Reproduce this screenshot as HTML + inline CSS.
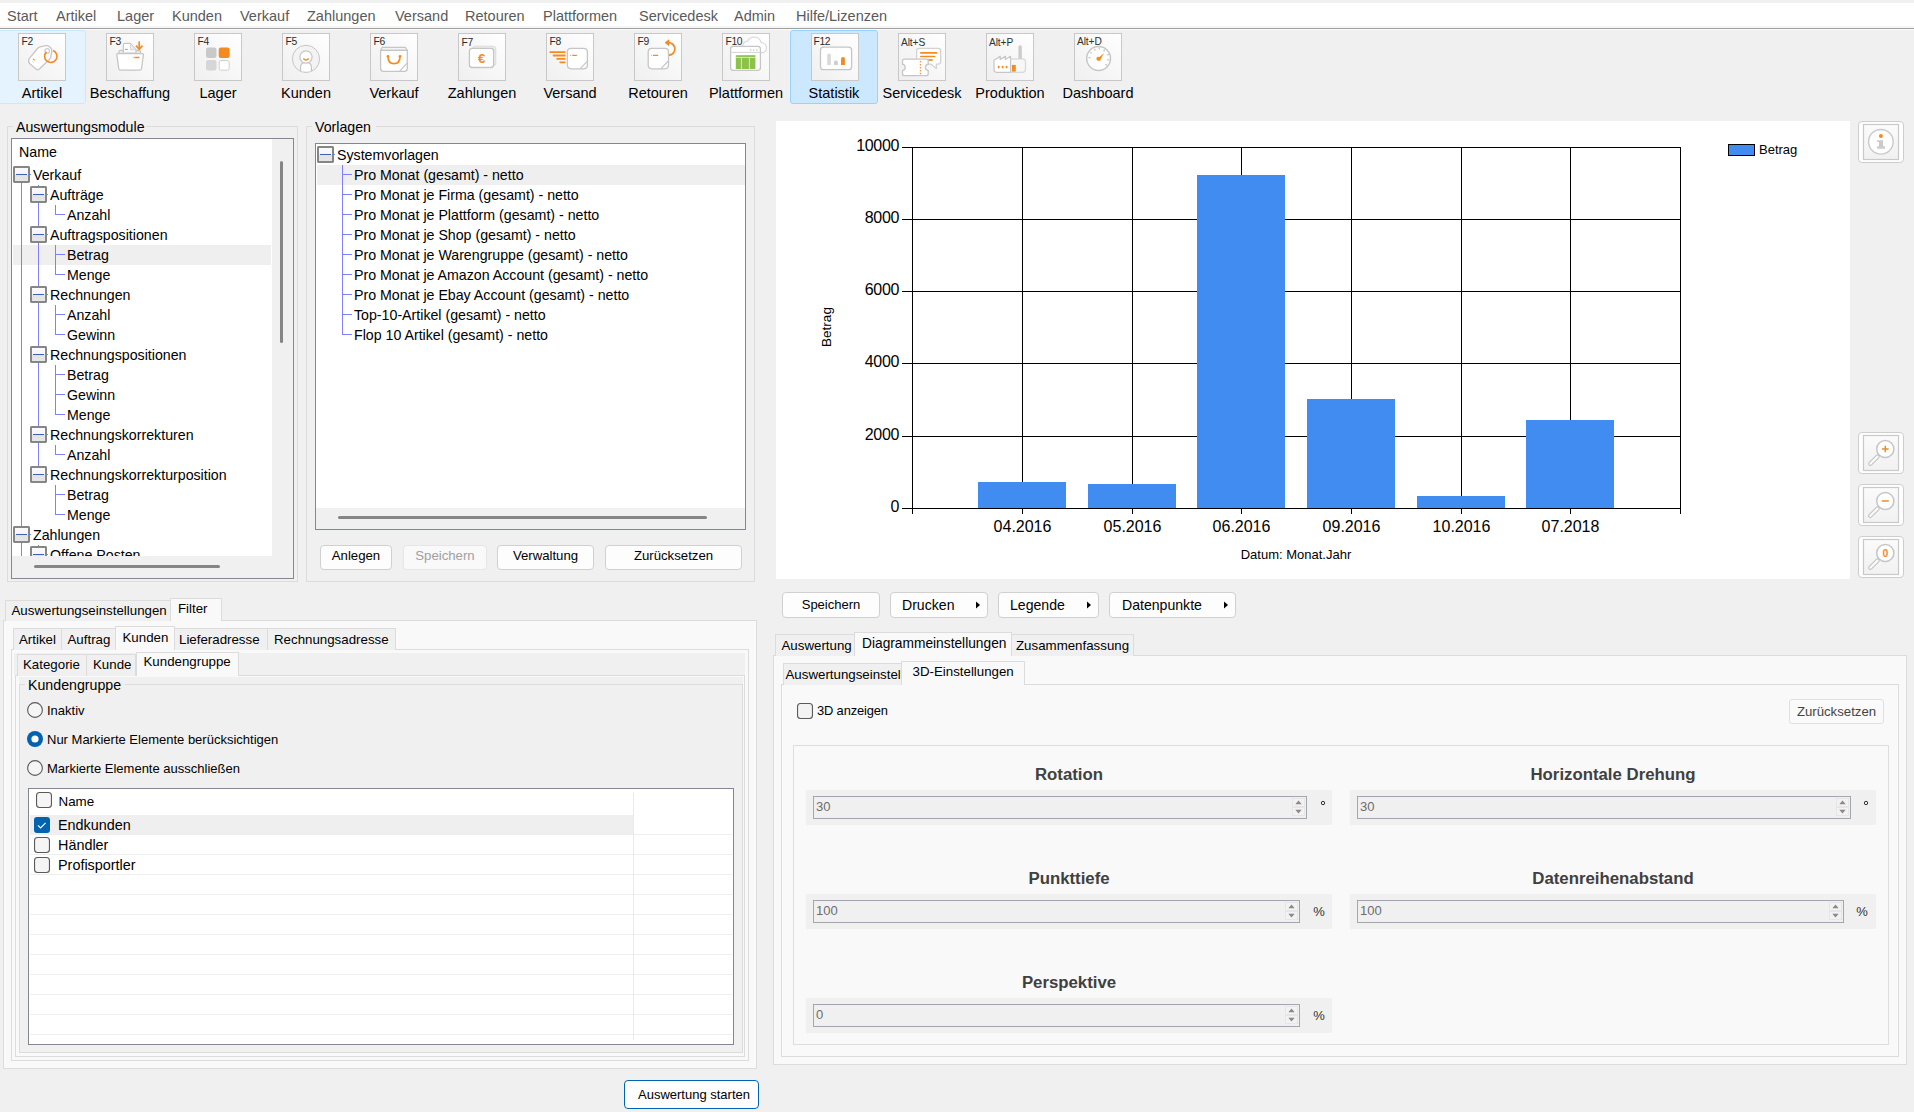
<!DOCTYPE html><html><head><meta charset="utf-8"><style>
html,body{margin:0;padding:0;}
body{width:1914px;height:1112px;position:relative;overflow:hidden;background:#f0f0f0;font-family:"Liberation Sans", sans-serif;}
.t{position:absolute;white-space:nowrap;}
.r{position:absolute;}
</style></head><body>
<div class="r" style="left:0px;top:3px;width:1914px;height:25px;background:#ffffff;"></div>
<div class="r" style="left:0px;top:26px;width:1914px;height:2px;background:#f6f6f6;"></div>
<div class="r" style="left:0px;top:28px;width:1914px;height:1px;background:#9f9f9f;"></div>
<div class="r" style="left:0px;top:29px;width:1914px;height:1px;background:#fbfbfb;"></div>
<div class="t" style="left:7px;top:6.98px;font-size:14.5px;line-height:18px;color:#5a5a5a;">Start</div>
<div class="t" style="left:56px;top:6.98px;font-size:14.5px;line-height:18px;color:#5a5a5a;">Artikel</div>
<div class="t" style="left:117px;top:6.98px;font-size:14.5px;line-height:18px;color:#5a5a5a;">Lager</div>
<div class="t" style="left:172px;top:6.98px;font-size:14.5px;line-height:18px;color:#5a5a5a;">Kunden</div>
<div class="t" style="left:240px;top:6.98px;font-size:14.5px;line-height:18px;color:#5a5a5a;">Verkauf</div>
<div class="t" style="left:307px;top:6.98px;font-size:14.5px;line-height:18px;color:#5a5a5a;">Zahlungen</div>
<div class="t" style="left:395px;top:6.98px;font-size:14.5px;line-height:18px;color:#5a5a5a;">Versand</div>
<div class="t" style="left:465px;top:6.98px;font-size:14.5px;line-height:18px;color:#5a5a5a;">Retouren</div>
<div class="t" style="left:543px;top:6.98px;font-size:14.5px;line-height:18px;color:#5a5a5a;">Plattformen</div>
<div class="t" style="left:639px;top:6.98px;font-size:14.5px;line-height:18px;color:#5a5a5a;">Servicedesk</div>
<div class="t" style="left:734px;top:6.98px;font-size:14.5px;line-height:18px;color:#5a5a5a;">Admin</div>
<div class="t" style="left:796px;top:6.98px;font-size:14.5px;line-height:18px;color:#5a5a5a;">Hilfe/Lizenzen</div>
<div class="r" style="left:-2px;top:30px;width:88px;height:74px;background:#e5f3ff;border:1px solid #cce8ff;box-sizing:border-box;border-radius:3px;"></div>
<div class="r" style="left:790px;top:30px;width:88px;height:74px;background:#cce8ff;border:1px solid #99d1ff;box-sizing:border-box;border-radius:3px;"></div>
<svg class="r" style="left:18px;top:33px;" width="48" height="48" viewBox="0 0 48 48"><defs><linearGradient id="g0" x1="1" y1="0" x2="0" y2="1"><stop offset="0" stop-color="#ffffff"/><stop offset="1" stop-color="#efefef"/></linearGradient></defs>
<rect x="0.5" y="0.5" width="47" height="47" fill="url(#g0)" stroke="#c8c8c8" stroke-width="1"/><path d="M11.2 25.6 L19.5 15.5 Q20.5 14.3 22 13.9 L28 12.6 Q29.6 12.3 30.8 13.3 L32.8 15 Q34 16 33.8 17.6 L32.8 23.5 Q32.5 25.2 31.3 26.5 L21.3 36 Q19.8 37.4 18.2 36.2 L11.6 30.6 Q9.7 28.9 11.2 25.6z" fill="#fff" stroke="#c6c6c6" stroke-width="1.3"/>
<circle cx="29.2" cy="18" r="2.3" fill="none" stroke="#cdcdcd" stroke-width="1.2"/>
<path d="M28.5 18.8 A6.2 6.2 0 1 0 35 17.5" fill="none" stroke="#f58a1f" stroke-width="1.6"/>
<path d="M15 25.8 l1.8 1.6" stroke="#f58a1f" stroke-width="1.1"/><path d="M14.2 28 l1.8 1.6" stroke="#d6d6d6" stroke-width="0.9"/></svg>
<div class="t" style="left:21.6px;top:34.93px;font-size:10.3px;line-height:13px;color:#2b2b2b;letter-spacing:-0.4px;">F2</div>
<div class="t" style="left:-18.00px;width:120px;text-align:center;top:83.98px;font-size:14.5px;line-height:18px;color:#000;">Artikel</div>
<svg class="r" style="left:106px;top:33px;" width="48" height="48" viewBox="0 0 48 48"><defs><linearGradient id="g1" x1="1" y1="0" x2="0" y2="1"><stop offset="0" stop-color="#ffffff"/><stop offset="1" stop-color="#efefef"/></linearGradient></defs>
<rect x="0.5" y="0.5" width="47" height="47" fill="url(#g1)" stroke="#c8c8c8" stroke-width="1"/><path d="M13 21 V18.8 Q13 17.3 14.5 17.3 H33 Q34.5 17.3 34.5 18.8 V21" fill="#e9e9e9" stroke="#c6c6c6" stroke-width="1.2"/>
<path d="M17.3 20 V11.8 Q17.3 10.4 18.7 10.4 H24.2 L30 16.8 V20z" fill="#fff" stroke="#c6c6c6" stroke-width="1.2"/>
<path d="M24.2 10.6 L24.8 16.8 H29.8" fill="#ececec" stroke="#d0d0d0" stroke-width="0.9"/>
<path d="M10.8 21.4 Q10.6 20.7 11.5 20.7 H36.6 Q37.5 20.7 37.4 21.4 L35.6 35.4 Q35.3 37.2 33.5 37.2 H14.8 Q13 37.2 12.7 35.4z" fill="#fff" stroke="#c6c6c6" stroke-width="1.3"/>
<path d="M19 16.4 h2.8" stroke="#f58a1f" stroke-width="1"/><path d="M26.8 24.5 h0.6 M28.4 24.5 h5" stroke="#f58a1f" stroke-width="1.3"/>
<path d="M33.2 8.4 v7" stroke="#f58a1f" stroke-width="1.7"/><path d="M30 12.6 L33.2 16.2 L36.4 12.6" fill="none" stroke="#f58a1f" stroke-width="1.7"/></svg>
<div class="t" style="left:109.6px;top:34.93px;font-size:10.3px;line-height:13px;color:#2b2b2b;letter-spacing:-0.4px;">F3</div>
<div class="t" style="left:70.00px;width:120px;text-align:center;top:83.98px;font-size:14.5px;line-height:18px;color:#000;">Beschaffung</div>
<svg class="r" style="left:194px;top:33px;" width="48" height="48" viewBox="0 0 48 48"><defs><linearGradient id="g2" x1="1" y1="0" x2="0" y2="1"><stop offset="0" stop-color="#ffffff"/><stop offset="1" stop-color="#efefef"/></linearGradient></defs>
<rect x="0.5" y="0.5" width="47" height="47" fill="url(#g2)" stroke="#c8c8c8" stroke-width="1"/><rect x="12" y="14.5" width="10.5" height="10.5" rx="2.2" fill="#c9c9c9"/>
<rect x="24.7" y="14.5" width="11" height="10.5" rx="2.2" fill="#f58a1f"/>
<rect x="12" y="27" width="10.5" height="10.5" rx="2.2" fill="#d6d6d6"/>
<rect x="25.2" y="27.5" width="10" height="9.7" rx="2" fill="#fff" stroke="#cfcfcf" stroke-width="1"/></svg>
<div class="t" style="left:197.6px;top:34.93px;font-size:10.3px;line-height:13px;color:#2b2b2b;letter-spacing:-0.4px;">F4</div>
<div class="t" style="left:158.00px;width:120px;text-align:center;top:83.98px;font-size:14.5px;line-height:18px;color:#000;">Lager</div>
<svg class="r" style="left:282px;top:33px;" width="48" height="48" viewBox="0 0 48 48"><defs><linearGradient id="g3" x1="1" y1="0" x2="0" y2="1"><stop offset="0" stop-color="#ffffff"/><stop offset="1" stop-color="#efefef"/></linearGradient></defs>
<rect x="0.5" y="0.5" width="47" height="47" fill="url(#g3)" stroke="#c8c8c8" stroke-width="1"/><circle cx="24" cy="25.9" r="13.6" fill="#f3f3f3" stroke="#c6c6c6" stroke-width="1"/>
<path d="M18.6 38.2 V34 Q18.6 29.4 24 29.4 Q29.4 29.4 29.4 34 V38.2" fill="#fff" stroke="#c6c6c6" stroke-width="1.2"/>
<circle cx="24" cy="24" r="6.1" fill="#fff" stroke="#c6c6c6" stroke-width="1.2"/>
<path d="M21.3 25.5 Q24 28.4 26.8 25.5" fill="none" stroke="#f58a1f" stroke-width="1.5"/></svg>
<div class="t" style="left:285.6px;top:34.93px;font-size:10.3px;line-height:13px;color:#2b2b2b;letter-spacing:-0.4px;">F5</div>
<div class="t" style="left:246.00px;width:120px;text-align:center;top:83.98px;font-size:14.5px;line-height:18px;color:#000;">Kunden</div>
<svg class="r" style="left:370px;top:33px;" width="48" height="48" viewBox="0 0 48 48"><defs><linearGradient id="g4" x1="1" y1="0" x2="0" y2="1"><stop offset="0" stop-color="#ffffff"/><stop offset="1" stop-color="#efefef"/></linearGradient></defs>
<rect x="0.5" y="0.5" width="47" height="47" fill="url(#g4)" stroke="#c8c8c8" stroke-width="1"/><path d="M12.3 14.3 H35.4 L37.2 17.4 H10.6z" fill="#f4f4f4" stroke="#c6c6c6" stroke-width="1.2" stroke-linejoin="round"/>
<path d="M10.6 17.4 H37.3 V35.6 Q37.3 38.4 34.5 38.4 H13.4 Q10.6 38.4 10.6 35.6z" fill="#fff" stroke="#c6c6c6" stroke-width="1.3"/>
<path d="M29.8 38.2 L37.1 30.2" stroke="#c6c6c6" stroke-width="1.2"/>
<path d="M18 23.4 Q18 30.6 24 30.6 Q30 30.6 30 23.4" fill="none" stroke="#f58a1f" stroke-width="1.7"/>
<circle cx="18" cy="23.3" r="1.3" fill="#f58a1f"/><circle cx="30" cy="23.3" r="1.3" fill="#f58a1f"/></svg>
<div class="t" style="left:373.6px;top:34.93px;font-size:10.3px;line-height:13px;color:#2b2b2b;letter-spacing:-0.4px;">F6</div>
<div class="t" style="left:334.00px;width:120px;text-align:center;top:83.98px;font-size:14.5px;line-height:18px;color:#000;">Verkauf</div>
<svg class="r" style="left:458px;top:33px;" width="48" height="48" viewBox="0 0 48 48"><defs><linearGradient id="g5" x1="1" y1="0" x2="0" y2="1"><stop offset="0" stop-color="#ffffff"/><stop offset="1" stop-color="#efefef"/></linearGradient></defs>
<rect x="0.5" y="0.5" width="47" height="47" fill="url(#g5)" stroke="#c8c8c8" stroke-width="1"/><rect x="14.7" y="13.2" width="23.1" height="19.6" rx="2.8" fill="#ececec" stroke="#dcdcdc" stroke-width="1"/>
<rect x="11.4" y="15.3" width="24.2" height="19.2" rx="2.8" fill="#fff" stroke="#c6c6c6" stroke-width="1.3"/>
<text x="23.6" y="29.6" font-family="Liberation Sans" font-weight="bold" font-size="13.2" fill="#f58a1f" text-anchor="middle">€</text></svg>
<div class="t" style="left:461.6px;top:35.73px;font-size:10.3px;line-height:13px;color:#2b2b2b;letter-spacing:-0.4px;">F7</div>
<div class="t" style="left:422.00px;width:120px;text-align:center;top:83.98px;font-size:14.5px;line-height:18px;color:#000;">Zahlungen</div>
<svg class="r" style="left:546px;top:33px;" width="48" height="48" viewBox="0 0 48 48"><defs><linearGradient id="g6" x1="1" y1="0" x2="0" y2="1"><stop offset="0" stop-color="#ffffff"/><stop offset="1" stop-color="#efefef"/></linearGradient></defs>
<rect x="0.5" y="0.5" width="47" height="47" fill="url(#g6)" stroke="#c8c8c8" stroke-width="1"/><path d="M4.3 19.2 H18.8 M7.6 22.5 H18.8 M11.2 25.9 H18.8 M14.2 29.3 H18.8" stroke="#f58a1f" stroke-width="1.8" stroke-linecap="round"/>
<path d="M21.4 19 Q21.4 15.3 25.1 15.3 H37.7 Q41.4 15.3 41.4 19 V32.1 Q41.4 35.8 37.7 35.8 H25.1 Q21.4 35.8 21.4 32.1z" fill="#fff" stroke="#c6c6c6" stroke-width="1.3"/>
<path d="M34.3 35.6 L41.2 28.3" stroke="#c6c6c6" stroke-width="1.2"/>
<path d="M24.2 22.4 h0.6 M26.3 22.4 h4.6" stroke="#f58a1f" stroke-width="1.2"/></svg>
<div class="t" style="left:549.6px;top:34.93px;font-size:10.3px;line-height:13px;color:#2b2b2b;letter-spacing:-0.4px;">F8</div>
<div class="t" style="left:510.00px;width:120px;text-align:center;top:83.98px;font-size:14.5px;line-height:18px;color:#000;">Versand</div>
<svg class="r" style="left:634px;top:33px;" width="48" height="48" viewBox="0 0 48 48"><defs><linearGradient id="g7" x1="1" y1="0" x2="0" y2="1"><stop offset="0" stop-color="#ffffff"/><stop offset="1" stop-color="#efefef"/></linearGradient></defs>
<rect x="0.5" y="0.5" width="47" height="47" fill="url(#g7)" stroke="#c8c8c8" stroke-width="1"/><path d="M14.2 19 Q14.2 15.3 17.9 15.3 H30.8 Q34.5 15.3 34.5 19 V32.1 Q34.5 35.8 30.8 35.8 H17.9 Q14.2 35.8 14.2 32.1z" fill="#fff" stroke="#c6c6c6" stroke-width="1.3"/>
<path d="M27 35.6 L34.3 28" stroke="#c6c6c6" stroke-width="1.2"/>
<path d="M17.1 22.4 h0.6 M19 22.4 h5.2" stroke="#f58a1f" stroke-width="1.2"/>
<path d="M35 22.2 A6.25 6.25 0 0 0 34.2 9.7" fill="none" stroke="#f58a1f" stroke-width="1.7"/>
<path d="M31 9.7 L35 6.8 L35 12.6z" fill="#f58a1f" stroke="#f58a1f" stroke-width="0.8" stroke-linejoin="round"/></svg>
<div class="t" style="left:637.6px;top:34.93px;font-size:10.3px;line-height:13px;color:#2b2b2b;letter-spacing:-0.4px;">F9</div>
<div class="t" style="left:598.00px;width:120px;text-align:center;top:83.98px;font-size:14.5px;line-height:18px;color:#000;">Retouren</div>
<svg class="r" style="left:722px;top:33px;" width="48" height="48" viewBox="0 0 48 48"><defs><linearGradient id="g8" x1="1" y1="0" x2="0" y2="1"><stop offset="0" stop-color="#ffffff"/><stop offset="1" stop-color="#efefef"/></linearGradient></defs>
<rect x="0.5" y="0.5" width="47" height="47" fill="url(#g8)" stroke="#c8c8c8" stroke-width="1"/><path d="M20.7 14 Q20.5 8.8 25.6 8.3 Q27.5 4 32.3 4 Q37.6 4.2 38.9 9.2 Q44.6 10.3 44.5 15.2 Q44.3 19.4 40 19.6 H30z" fill="#fff" stroke="#d6d6d6" stroke-width="1.1"/>
<rect x="8.6" y="13.4" width="29.8" height="23.9" rx="2.5" fill="#fff" stroke="#c6c6c6" stroke-width="1.3"/>
<path d="M8.6 19.4 H38.4" stroke="#d6d6d6" stroke-width="1.1"/>
<circle cx="28.7" cy="17" r="0.9" fill="#d8d8d8"/><circle cx="31.7" cy="17" r="0.9" fill="#d8d8d8"/><circle cx="34.7" cy="17" r="0.9" fill="#d8d8d8"/>
<rect x="13.8" y="22.2" width="19.6" height="13.8" fill="#8bc34a"/>
<path d="M13.8 24.4 H33.4 M19.4 24.4 V36 M27.4 24.4 V36" stroke="#e6f2d8" stroke-width="0.8"/></svg>
<div class="t" style="left:725.6px;top:34.93px;font-size:10.3px;line-height:13px;color:#2b2b2b;letter-spacing:-0.4px;">F10</div>
<div class="t" style="left:686.00px;width:120px;text-align:center;top:83.98px;font-size:14.5px;line-height:18px;color:#000;">Plattformen</div>
<svg class="r" style="left:811px;top:33px;" width="48" height="48" viewBox="0 0 48 48"><defs><linearGradient id="g9" x1="1" y1="0" x2="0" y2="1"><stop offset="0" stop-color="#ffffff"/><stop offset="1" stop-color="#efefef"/></linearGradient></defs>
<rect x="0.5" y="0.5" width="47" height="47" fill="url(#g9)" stroke="#c8c8c8" stroke-width="1"/><rect x="9.5" y="14.2" width="31.1" height="22.5" rx="3" fill="#fff" stroke="#c6c6c6" stroke-width="1.3"/>
<path d="M16.2 31.9 V22.2 Q16.2 20.5 18 20.5 Q19.9 20.5 19.9 22.2 V31.9z" fill="#dadada"/>
<path d="M23.1 31.9 V28.8 Q23.1 27.4 25 27.4 Q26.8 27.4 26.8 28.8 V31.9z" fill="#cdcdcd"/>
<path d="M30 31.9 V25.8 Q30 24 32 24 Q33.9 24 33.9 25.8 V31.9z" fill="#f58a1f"/></svg>
<div class="t" style="left:813.6px;top:34.93px;font-size:10.3px;line-height:13px;color:#2b2b2b;letter-spacing:-0.4px;">F12</div>
<div class="t" style="left:774.00px;width:120px;text-align:center;top:83.98px;font-size:14.5px;line-height:18px;color:#000;">Statistik</div>
<svg class="r" style="left:898px;top:33px;" width="48" height="48" viewBox="0 0 48 48"><defs><linearGradient id="g10" x1="1" y1="0" x2="0" y2="1"><stop offset="0" stop-color="#ffffff"/><stop offset="1" stop-color="#efefef"/></linearGradient></defs>
<rect x="0.5" y="0.5" width="47" height="47" fill="url(#g10)" stroke="#c8c8c8" stroke-width="1"/><path d="M18.6 17.8 Q18.6 15.3 21.1 15.3 H40.2 Q42.7 15.3 42.7 17.8 V28.6 Q42.7 31.1 40.2 31.1 H38.4 V35.4 L32.8 31.1 H21.1 Q18.6 31.1 18.6 28.6z" fill="#fff" stroke="#d2d2d2" stroke-width="1.3" stroke-linejoin="round"/>
<path d="M22.9 19.9 H38.6 M22.9 23.5 H36.7" stroke="#f58a1f" stroke-width="1.7" stroke-linecap="round"/>
<path d="M30.2 27 H34.7" stroke="#f58a1f" stroke-width="1.7"/>
<path d="M4.5 28 Q4.5 26.1 6.4 26.1 H28.3 Q30.2 26.1 30.2 28 V31.2 Q27.4 31.8 27.4 34.4 Q27.4 37 30.2 37.6 V40.8 Q30.2 42.7 28.3 42.7 H6.4 Q4.5 42.7 4.5 40.8 V37.6 Q7.2 37 7.2 34.4 Q7.2 31.8 4.5 31.2z" fill="#fff" stroke="#c6c6c6" stroke-width="1.3"/>
<path d="M22.4 28.7 V41" stroke="#f58a1f" stroke-width="1.5" stroke-linecap="round" stroke-dasharray="0 2.98"/></svg>
<div class="t" style="left:901px;top:36.37px;font-size:10.2px;line-height:13px;color:#303030;letter-spacing:-0.1px;">Alt+S</div>
<div class="t" style="left:862.00px;width:120px;text-align:center;top:83.98px;font-size:14.5px;line-height:18px;color:#000;">Servicedesk</div>
<svg class="r" style="left:986px;top:33px;" width="48" height="48" viewBox="0 0 48 48"><defs><linearGradient id="g11" x1="1" y1="0" x2="0" y2="1"><stop offset="0" stop-color="#ffffff"/><stop offset="1" stop-color="#efefef"/></linearGradient></defs>
<rect x="0.5" y="0.5" width="47" height="47" fill="url(#g11)" stroke="#c8c8c8" stroke-width="1"/><path d="M32.4 25.9 V13.9 Q32.4 12.3 34.1 12.3 Q35.8 12.3 35.8 13.9 V25.9z" fill="#cbcbcb"/>
<path d="M24.5 25.9 H36.5 Q39.5 25.9 39.5 28.9 V36.3 Q39.5 39.3 36.5 39.3 H24.5z" fill="#f7f7f7" stroke="#d8d8d8" stroke-width="1.2"/>
<path d="M8 27.3 L14.2 23.3 V26.6 L19.4 23.3 V26.6 L24.5 23.3 V39.3 H10.5 Q8 39.3 8 36.8z" fill="#fff" stroke="#c6c6c6" stroke-width="1.2" stroke-linejoin="round"/>
<ellipse cx="12.7" cy="34.1" rx="1" ry="1.4" fill="#f58a1f"/><ellipse cx="16.6" cy="34.1" rx="1" ry="1.4" fill="#f58a1f"/><ellipse cx="20.5" cy="34.1" rx="1" ry="1.4" fill="#f58a1f"/>
<rect x="25.9" y="31.9" width="3.9" height="6.7" fill="#f58a1f"/></svg>
<div class="t" style="left:989px;top:36.37px;font-size:10.2px;line-height:13px;color:#303030;letter-spacing:-0.1px;">Alt+P</div>
<div class="t" style="left:950.00px;width:120px;text-align:center;top:83.98px;font-size:14.5px;line-height:18px;color:#000;">Produktion</div>
<svg class="r" style="left:1074px;top:33px;" width="48" height="48" viewBox="0 0 48 48"><defs><linearGradient id="g12" x1="1" y1="0" x2="0" y2="1"><stop offset="0" stop-color="#ffffff"/><stop offset="1" stop-color="#efefef"/></linearGradient></defs>
<rect x="0.5" y="0.5" width="47" height="47" fill="url(#g12)" stroke="#c8c8c8" stroke-width="1"/><circle cx="24.6" cy="25.5" r="11.9" fill="#fff" stroke="#c6c6c6" stroke-width="1.5"/>
<g stroke="#c6c6c6" stroke-width="1.3"><path d="M25.2 14.4 v2.2"/><path d="M20.4 15.8 l0.9 1.8"/><path d="M16.2 19.2 l1.8 1"/><path d="M14.4 24.6 h2.2"/><path d="M30.6 16.6 l-1 1.8"/><path d="M35 21.4 l-2.1 0.6"/><path d="M35.4 26.8 h-2.2"/><path d="M33 32.6 l-1.6 -1.4"/></g>
<path d="M22.8 26.6 L29.9 20 L26 27.8z" fill="#f58a1f"/><circle cx="24.4" cy="25.8" r="2" fill="#f58a1f"/></svg>
<div class="t" style="left:1077px;top:35.37px;font-size:10.2px;line-height:13px;color:#303030;letter-spacing:-0.1px;">Alt+D</div>
<div class="t" style="left:1038.00px;width:120px;text-align:center;top:83.98px;font-size:14.5px;line-height:18px;color:#000;">Dashboard</div>
<div class="r" style="left:7px;top:126px;width:291px;height:456px;border:1px solid #dcdcdc;box-sizing:border-box;"></div>
<div class="r" style="left:13px;top:125px;width:133px;height:3px;background:#f0f0f0;"></div>
<div class="t" style="left:16px;top:118.08px;font-size:14.2px;line-height:18px;color:#000;">Auswertungsmodule</div>
<div class="r" style="left:11px;top:138px;width:283px;height:441px;background:#ffffff;border:1px solid #828790;box-sizing:border-box;"></div>
<div class="r" style="left:272px;top:139px;width:21px;height:439px;background:#f0f0f0;"></div>
<div class="r" style="left:12px;top:556px;width:281px;height:22px;background:#f0f0f0;"></div>
<div class="r" style="left:280px;top:161px;width:3px;height:182px;background:#858585;border-radius:1.5px;"></div>
<div class="r" style="left:34px;top:565px;width:186px;height:3px;background:#858585;border-radius:1.5px;"></div>
<div class="t" style="left:19px;top:143.08px;font-size:14.2px;line-height:18px;color:#000;">Name</div>
<div class="r" style="left:0;top:0;width:272px;height:556px;clip-path:inset(139px 0 0 11px);">
<div class="r" style="left:13px;top:245px;width:258px;height:20px;background:#efefef;"></div>
<div class="r" style="left:21px;top:174px;width:1px;height:360px;background:#7f7fff;"></div>
<div class="r" style="left:30px;top:174px;width:1px;height:1px;background:#7f7fff;"></div>
<div class="r" style="left:38px;top:194px;width:1px;height:40px;background:#7f7fff;"></div>
<div class="r" style="left:47px;top:194px;width:1px;height:1px;background:#7f7fff;"></div>
<div class="r" style="left:55px;top:205px;width:1px;height:9px;background:#7f7fff;"></div>
<div class="r" style="left:55px;top:214px;width:10px;height:1px;background:#7f7fff;"></div>
<div class="r" style="left:38px;top:234px;width:1px;height:60px;background:#7f7fff;"></div>
<div class="r" style="left:47px;top:234px;width:1px;height:1px;background:#7f7fff;"></div>
<div class="r" style="left:55px;top:245px;width:1px;height:9px;background:#7f7fff;"></div>
<div class="r" style="left:55px;top:254px;width:10px;height:1px;background:#7f7fff;"></div>
<div class="r" style="left:55px;top:254px;width:1px;height:20px;background:#7f7fff;"></div>
<div class="r" style="left:55px;top:265px;width:1px;height:9px;background:#7f7fff;"></div>
<div class="r" style="left:55px;top:274px;width:10px;height:1px;background:#7f7fff;"></div>
<div class="r" style="left:38px;top:294px;width:1px;height:60px;background:#7f7fff;"></div>
<div class="r" style="left:47px;top:294px;width:1px;height:1px;background:#7f7fff;"></div>
<div class="r" style="left:55px;top:305px;width:1px;height:9px;background:#7f7fff;"></div>
<div class="r" style="left:55px;top:314px;width:10px;height:1px;background:#7f7fff;"></div>
<div class="r" style="left:55px;top:314px;width:1px;height:20px;background:#7f7fff;"></div>
<div class="r" style="left:55px;top:325px;width:1px;height:9px;background:#7f7fff;"></div>
<div class="r" style="left:55px;top:334px;width:10px;height:1px;background:#7f7fff;"></div>
<div class="r" style="left:38px;top:354px;width:1px;height:80px;background:#7f7fff;"></div>
<div class="r" style="left:47px;top:354px;width:1px;height:1px;background:#7f7fff;"></div>
<div class="r" style="left:55px;top:365px;width:1px;height:9px;background:#7f7fff;"></div>
<div class="r" style="left:55px;top:374px;width:10px;height:1px;background:#7f7fff;"></div>
<div class="r" style="left:55px;top:374px;width:1px;height:20px;background:#7f7fff;"></div>
<div class="r" style="left:55px;top:385px;width:1px;height:9px;background:#7f7fff;"></div>
<div class="r" style="left:55px;top:394px;width:10px;height:1px;background:#7f7fff;"></div>
<div class="r" style="left:55px;top:394px;width:1px;height:20px;background:#7f7fff;"></div>
<div class="r" style="left:55px;top:405px;width:1px;height:9px;background:#7f7fff;"></div>
<div class="r" style="left:55px;top:414px;width:10px;height:1px;background:#7f7fff;"></div>
<div class="r" style="left:38px;top:434px;width:1px;height:40px;background:#7f7fff;"></div>
<div class="r" style="left:47px;top:434px;width:1px;height:1px;background:#7f7fff;"></div>
<div class="r" style="left:55px;top:445px;width:1px;height:9px;background:#7f7fff;"></div>
<div class="r" style="left:55px;top:454px;width:10px;height:1px;background:#7f7fff;"></div>
<div class="r" style="left:47px;top:474px;width:1px;height:1px;background:#7f7fff;"></div>
<div class="r" style="left:55px;top:485px;width:1px;height:9px;background:#7f7fff;"></div>
<div class="r" style="left:55px;top:494px;width:10px;height:1px;background:#7f7fff;"></div>
<div class="r" style="left:55px;top:494px;width:1px;height:20px;background:#7f7fff;"></div>
<div class="r" style="left:55px;top:505px;width:1px;height:9px;background:#7f7fff;"></div>
<div class="r" style="left:55px;top:514px;width:10px;height:1px;background:#7f7fff;"></div>
<div class="r" style="left:21px;top:534px;width:1px;height:22px;background:#7f7fff;"></div>
<div class="r" style="left:30px;top:534px;width:1px;height:1px;background:#7f7fff;"></div>
<div class="r" style="left:38px;top:554px;width:1px;height:2px;background:#7f7fff;"></div>
<div class="r" style="left:47px;top:554px;width:1px;height:1px;background:#7f7fff;"></div>
<svg class="r" style="left:13px;top:166px;" width="17" height="17" viewBox="0 0 17 17"><defs><linearGradient id="ex13_166" x1="0" y1="0" x2="0" y2="1"><stop offset="0" stop-color="#fbfbfb"/><stop offset="0.5" stop-color="#f4f4f4"/><stop offset="0.52" stop-color="#e2e2e2"/><stop offset="1" stop-color="#e6e6e6"/></linearGradient></defs>
<rect x="1" y="1" width="15" height="15" fill="url(#ex13_166)" stroke="#868686" stroke-width="2"/>
<path d="M3 8.5 h11" stroke="#3d5fb8" stroke-width="1"/>
<rect x="0" y="0" width="1" height="1" fill="#c8c8c8"/><rect x="16" y="0" width="1" height="1" fill="#c8c8c8"/><rect x="0" y="16" width="1" height="1" fill="#c8c8c8"/><rect x="16" y="16" width="1" height="1" fill="#c8c8c8"/></svg>
<div class="t" style="left:33px;top:166.08px;font-size:14.2px;line-height:18px;color:#000;">Verkauf</div>
<div class="r" style="left:38px;top:185px;width:1px;height:1px;background:#7f7fff;"></div>
<svg class="r" style="left:30px;top:186px;" width="17" height="17" viewBox="0 0 17 17"><defs><linearGradient id="ex30_186" x1="0" y1="0" x2="0" y2="1"><stop offset="0" stop-color="#fbfbfb"/><stop offset="0.5" stop-color="#f4f4f4"/><stop offset="0.52" stop-color="#e2e2e2"/><stop offset="1" stop-color="#e6e6e6"/></linearGradient></defs>
<rect x="1" y="1" width="15" height="15" fill="url(#ex30_186)" stroke="#868686" stroke-width="2"/>
<path d="M3 8.5 h11" stroke="#3d5fb8" stroke-width="1"/>
<rect x="0" y="0" width="1" height="1" fill="#c8c8c8"/><rect x="16" y="0" width="1" height="1" fill="#c8c8c8"/><rect x="0" y="16" width="1" height="1" fill="#c8c8c8"/><rect x="16" y="16" width="1" height="1" fill="#c8c8c8"/></svg>
<div class="t" style="left:50px;top:186.08px;font-size:14.2px;line-height:18px;color:#000;">Aufträge</div>
<div class="t" style="left:67px;top:206.08px;font-size:14.2px;line-height:18px;color:#000;">Anzahl</div>
<div class="r" style="left:38px;top:225px;width:1px;height:1px;background:#7f7fff;"></div>
<svg class="r" style="left:30px;top:226px;" width="17" height="17" viewBox="0 0 17 17"><defs><linearGradient id="ex30_226" x1="0" y1="0" x2="0" y2="1"><stop offset="0" stop-color="#fbfbfb"/><stop offset="0.5" stop-color="#f4f4f4"/><stop offset="0.52" stop-color="#e2e2e2"/><stop offset="1" stop-color="#e6e6e6"/></linearGradient></defs>
<rect x="1" y="1" width="15" height="15" fill="url(#ex30_226)" stroke="#868686" stroke-width="2"/>
<path d="M3 8.5 h11" stroke="#3d5fb8" stroke-width="1"/>
<rect x="0" y="0" width="1" height="1" fill="#c8c8c8"/><rect x="16" y="0" width="1" height="1" fill="#c8c8c8"/><rect x="0" y="16" width="1" height="1" fill="#c8c8c8"/><rect x="16" y="16" width="1" height="1" fill="#c8c8c8"/></svg>
<div class="t" style="left:50px;top:226.08px;font-size:14.2px;line-height:18px;color:#000;">Auftragspositionen</div>
<div class="t" style="left:67px;top:246.08px;font-size:14.2px;line-height:18px;color:#000;">Betrag</div>
<div class="t" style="left:67px;top:266.08px;font-size:14.2px;line-height:18px;color:#000;">Menge</div>
<div class="r" style="left:38px;top:285px;width:1px;height:1px;background:#7f7fff;"></div>
<svg class="r" style="left:30px;top:286px;" width="17" height="17" viewBox="0 0 17 17"><defs><linearGradient id="ex30_286" x1="0" y1="0" x2="0" y2="1"><stop offset="0" stop-color="#fbfbfb"/><stop offset="0.5" stop-color="#f4f4f4"/><stop offset="0.52" stop-color="#e2e2e2"/><stop offset="1" stop-color="#e6e6e6"/></linearGradient></defs>
<rect x="1" y="1" width="15" height="15" fill="url(#ex30_286)" stroke="#868686" stroke-width="2"/>
<path d="M3 8.5 h11" stroke="#3d5fb8" stroke-width="1"/>
<rect x="0" y="0" width="1" height="1" fill="#c8c8c8"/><rect x="16" y="0" width="1" height="1" fill="#c8c8c8"/><rect x="0" y="16" width="1" height="1" fill="#c8c8c8"/><rect x="16" y="16" width="1" height="1" fill="#c8c8c8"/></svg>
<div class="t" style="left:50px;top:286.08px;font-size:14.2px;line-height:18px;color:#000;">Rechnungen</div>
<div class="t" style="left:67px;top:306.08px;font-size:14.2px;line-height:18px;color:#000;">Anzahl</div>
<div class="t" style="left:67px;top:326.08px;font-size:14.2px;line-height:18px;color:#000;">Gewinn</div>
<div class="r" style="left:38px;top:345px;width:1px;height:1px;background:#7f7fff;"></div>
<svg class="r" style="left:30px;top:346px;" width="17" height="17" viewBox="0 0 17 17"><defs><linearGradient id="ex30_346" x1="0" y1="0" x2="0" y2="1"><stop offset="0" stop-color="#fbfbfb"/><stop offset="0.5" stop-color="#f4f4f4"/><stop offset="0.52" stop-color="#e2e2e2"/><stop offset="1" stop-color="#e6e6e6"/></linearGradient></defs>
<rect x="1" y="1" width="15" height="15" fill="url(#ex30_346)" stroke="#868686" stroke-width="2"/>
<path d="M3 8.5 h11" stroke="#3d5fb8" stroke-width="1"/>
<rect x="0" y="0" width="1" height="1" fill="#c8c8c8"/><rect x="16" y="0" width="1" height="1" fill="#c8c8c8"/><rect x="0" y="16" width="1" height="1" fill="#c8c8c8"/><rect x="16" y="16" width="1" height="1" fill="#c8c8c8"/></svg>
<div class="t" style="left:50px;top:346.08px;font-size:14.2px;line-height:18px;color:#000;">Rechnungspositionen</div>
<div class="t" style="left:67px;top:366.08px;font-size:14.2px;line-height:18px;color:#000;">Betrag</div>
<div class="t" style="left:67px;top:386.08px;font-size:14.2px;line-height:18px;color:#000;">Gewinn</div>
<div class="t" style="left:67px;top:406.08px;font-size:14.2px;line-height:18px;color:#000;">Menge</div>
<div class="r" style="left:38px;top:425px;width:1px;height:1px;background:#7f7fff;"></div>
<svg class="r" style="left:30px;top:426px;" width="17" height="17" viewBox="0 0 17 17"><defs><linearGradient id="ex30_426" x1="0" y1="0" x2="0" y2="1"><stop offset="0" stop-color="#fbfbfb"/><stop offset="0.5" stop-color="#f4f4f4"/><stop offset="0.52" stop-color="#e2e2e2"/><stop offset="1" stop-color="#e6e6e6"/></linearGradient></defs>
<rect x="1" y="1" width="15" height="15" fill="url(#ex30_426)" stroke="#868686" stroke-width="2"/>
<path d="M3 8.5 h11" stroke="#3d5fb8" stroke-width="1"/>
<rect x="0" y="0" width="1" height="1" fill="#c8c8c8"/><rect x="16" y="0" width="1" height="1" fill="#c8c8c8"/><rect x="0" y="16" width="1" height="1" fill="#c8c8c8"/><rect x="16" y="16" width="1" height="1" fill="#c8c8c8"/></svg>
<div class="t" style="left:50px;top:426.08px;font-size:14.2px;line-height:18px;color:#000;">Rechnungskorrekturen</div>
<div class="t" style="left:67px;top:446.08px;font-size:14.2px;line-height:18px;color:#000;">Anzahl</div>
<div class="r" style="left:38px;top:465px;width:1px;height:1px;background:#7f7fff;"></div>
<svg class="r" style="left:30px;top:466px;" width="17" height="17" viewBox="0 0 17 17"><defs><linearGradient id="ex30_466" x1="0" y1="0" x2="0" y2="1"><stop offset="0" stop-color="#fbfbfb"/><stop offset="0.5" stop-color="#f4f4f4"/><stop offset="0.52" stop-color="#e2e2e2"/><stop offset="1" stop-color="#e6e6e6"/></linearGradient></defs>
<rect x="1" y="1" width="15" height="15" fill="url(#ex30_466)" stroke="#868686" stroke-width="2"/>
<path d="M3 8.5 h11" stroke="#3d5fb8" stroke-width="1"/>
<rect x="0" y="0" width="1" height="1" fill="#c8c8c8"/><rect x="16" y="0" width="1" height="1" fill="#c8c8c8"/><rect x="0" y="16" width="1" height="1" fill="#c8c8c8"/><rect x="16" y="16" width="1" height="1" fill="#c8c8c8"/></svg>
<div class="t" style="left:50px;top:466.08px;font-size:14.2px;line-height:18px;color:#000;">Rechnungskorrekturposition</div>
<div class="t" style="left:67px;top:486.08px;font-size:14.2px;line-height:18px;color:#000;">Betrag</div>
<div class="t" style="left:67px;top:506.08px;font-size:14.2px;line-height:18px;color:#000;">Menge</div>
<svg class="r" style="left:13px;top:526px;" width="17" height="17" viewBox="0 0 17 17"><defs><linearGradient id="ex13_526" x1="0" y1="0" x2="0" y2="1"><stop offset="0" stop-color="#fbfbfb"/><stop offset="0.5" stop-color="#f4f4f4"/><stop offset="0.52" stop-color="#e2e2e2"/><stop offset="1" stop-color="#e6e6e6"/></linearGradient></defs>
<rect x="1" y="1" width="15" height="15" fill="url(#ex13_526)" stroke="#868686" stroke-width="2"/>
<path d="M3 8.5 h11" stroke="#3d5fb8" stroke-width="1"/>
<rect x="0" y="0" width="1" height="1" fill="#c8c8c8"/><rect x="16" y="0" width="1" height="1" fill="#c8c8c8"/><rect x="0" y="16" width="1" height="1" fill="#c8c8c8"/><rect x="16" y="16" width="1" height="1" fill="#c8c8c8"/></svg>
<div class="t" style="left:33px;top:526.08px;font-size:14.2px;line-height:18px;color:#000;">Zahlungen</div>
<div class="r" style="left:38px;top:545px;width:1px;height:1px;background:#7f7fff;"></div>
<svg class="r" style="left:30px;top:546px;" width="17" height="17" viewBox="0 0 17 17"><defs><linearGradient id="ex30_546" x1="0" y1="0" x2="0" y2="1"><stop offset="0" stop-color="#fbfbfb"/><stop offset="0.5" stop-color="#f4f4f4"/><stop offset="0.52" stop-color="#e2e2e2"/><stop offset="1" stop-color="#e6e6e6"/></linearGradient></defs>
<rect x="1" y="1" width="15" height="15" fill="url(#ex30_546)" stroke="#868686" stroke-width="2"/>
<path d="M3 8.5 h11" stroke="#3d5fb8" stroke-width="1"/>
<rect x="0" y="0" width="1" height="1" fill="#c8c8c8"/><rect x="16" y="0" width="1" height="1" fill="#c8c8c8"/><rect x="0" y="16" width="1" height="1" fill="#c8c8c8"/><rect x="16" y="16" width="1" height="1" fill="#c8c8c8"/></svg>
<div class="t" style="left:50px;top:546.08px;font-size:14.2px;line-height:18px;color:#000;">Offene Posten</div>
</div>
<div class="r" style="left:306px;top:126px;width:449px;height:456px;border:1px solid #dcdcdc;box-sizing:border-box;"></div>
<div class="r" style="left:312px;top:125px;width:64px;height:3px;background:#f0f0f0;"></div>
<div class="t" style="left:315px;top:118.08px;font-size:14.2px;line-height:18px;color:#000;">Vorlagen</div>
<div class="r" style="left:315px;top:143px;width:431px;height:387px;background:#ffffff;border:1px solid #828790;box-sizing:border-box;"></div>
<div class="r" style="left:316px;top:508px;width:429px;height:21px;background:#f0f0f0;"></div>
<div class="r" style="left:338px;top:516px;width:369px;height:3px;background:#858585;border-radius:1.5px;"></div>
<div class="r" style="left:0;top:0;width:745px;height:508px;clip-path:inset(144px 0 0 315px);">
<div class="r" style="left:317px;top:165px;width:428px;height:20px;background:#efefef;"></div>
<div class="r" style="left:334px;top:154px;width:1px;height:1px;background:#7f7fff;"></div>
<div class="r" style="left:342px;top:165px;width:1px;height:9px;background:#7f7fff;"></div>
<div class="r" style="left:342px;top:174px;width:10px;height:1px;background:#7f7fff;"></div>
<div class="r" style="left:342px;top:174px;width:1px;height:20px;background:#7f7fff;"></div>
<div class="r" style="left:342px;top:185px;width:1px;height:9px;background:#7f7fff;"></div>
<div class="r" style="left:342px;top:194px;width:10px;height:1px;background:#7f7fff;"></div>
<div class="r" style="left:342px;top:194px;width:1px;height:20px;background:#7f7fff;"></div>
<div class="r" style="left:342px;top:205px;width:1px;height:9px;background:#7f7fff;"></div>
<div class="r" style="left:342px;top:214px;width:10px;height:1px;background:#7f7fff;"></div>
<div class="r" style="left:342px;top:214px;width:1px;height:20px;background:#7f7fff;"></div>
<div class="r" style="left:342px;top:225px;width:1px;height:9px;background:#7f7fff;"></div>
<div class="r" style="left:342px;top:234px;width:10px;height:1px;background:#7f7fff;"></div>
<div class="r" style="left:342px;top:234px;width:1px;height:20px;background:#7f7fff;"></div>
<div class="r" style="left:342px;top:245px;width:1px;height:9px;background:#7f7fff;"></div>
<div class="r" style="left:342px;top:254px;width:10px;height:1px;background:#7f7fff;"></div>
<div class="r" style="left:342px;top:254px;width:1px;height:20px;background:#7f7fff;"></div>
<div class="r" style="left:342px;top:265px;width:1px;height:9px;background:#7f7fff;"></div>
<div class="r" style="left:342px;top:274px;width:10px;height:1px;background:#7f7fff;"></div>
<div class="r" style="left:342px;top:274px;width:1px;height:20px;background:#7f7fff;"></div>
<div class="r" style="left:342px;top:285px;width:1px;height:9px;background:#7f7fff;"></div>
<div class="r" style="left:342px;top:294px;width:10px;height:1px;background:#7f7fff;"></div>
<div class="r" style="left:342px;top:294px;width:1px;height:20px;background:#7f7fff;"></div>
<div class="r" style="left:342px;top:305px;width:1px;height:9px;background:#7f7fff;"></div>
<div class="r" style="left:342px;top:314px;width:10px;height:1px;background:#7f7fff;"></div>
<div class="r" style="left:342px;top:314px;width:1px;height:20px;background:#7f7fff;"></div>
<div class="r" style="left:342px;top:325px;width:1px;height:9px;background:#7f7fff;"></div>
<div class="r" style="left:342px;top:334px;width:10px;height:1px;background:#7f7fff;"></div>
<svg class="r" style="left:317px;top:146px;" width="17" height="17" viewBox="0 0 17 17"><defs><linearGradient id="ex317_146" x1="0" y1="0" x2="0" y2="1"><stop offset="0" stop-color="#fbfbfb"/><stop offset="0.5" stop-color="#f4f4f4"/><stop offset="0.52" stop-color="#e2e2e2"/><stop offset="1" stop-color="#e6e6e6"/></linearGradient></defs>
<rect x="1" y="1" width="15" height="15" fill="url(#ex317_146)" stroke="#868686" stroke-width="2"/>
<path d="M3 8.5 h11" stroke="#3d5fb8" stroke-width="1"/>
<rect x="0" y="0" width="1" height="1" fill="#c8c8c8"/><rect x="16" y="0" width="1" height="1" fill="#c8c8c8"/><rect x="0" y="16" width="1" height="1" fill="#c8c8c8"/><rect x="16" y="16" width="1" height="1" fill="#c8c8c8"/></svg>
<div class="t" style="left:337px;top:146.08px;font-size:14.2px;line-height:18px;color:#000;">Systemvorlagen</div>
<div class="t" style="left:354px;top:166.08px;font-size:14.2px;line-height:18px;color:#000;">Pro Monat (gesamt) - netto</div>
<div class="t" style="left:354px;top:186.08px;font-size:14.2px;line-height:18px;color:#000;">Pro Monat je Firma (gesamt) - netto</div>
<div class="t" style="left:354px;top:206.08px;font-size:14.2px;line-height:18px;color:#000;">Pro Monat je Plattform (gesamt) - netto</div>
<div class="t" style="left:354px;top:226.08px;font-size:14.2px;line-height:18px;color:#000;">Pro Monat je Shop (gesamt) - netto</div>
<div class="t" style="left:354px;top:246.08px;font-size:14.2px;line-height:18px;color:#000;">Pro Monat je Warengruppe (gesamt) - netto</div>
<div class="t" style="left:354px;top:266.08px;font-size:14.2px;line-height:18px;color:#000;">Pro Monat je Amazon Account (gesamt) - netto</div>
<div class="t" style="left:354px;top:286.08px;font-size:14.2px;line-height:18px;color:#000;">Pro Monat je Ebay Account (gesamt) - netto</div>
<div class="t" style="left:354px;top:306.08px;font-size:14.2px;line-height:18px;color:#000;">Top-10-Artikel (gesamt) - netto</div>
<div class="t" style="left:354px;top:326.08px;font-size:14.2px;line-height:18px;color:#000;">Flop 10 Artikel (gesamt) - netto</div>
</div>
<div class="r" style="left:320px;top:545px;width:72px;height:25px;background:#fdfdfd;border:1px solid #d0d0d0;box-sizing:border-box;border-radius:4px;"></div>
<div class="t" style="left:320.00px;width:72px;text-align:center;top:548.43px;font-size:13.2px;line-height:16px;color:#000;">Anlegen</div>
<div class="r" style="left:403px;top:545px;width:84px;height:25px;background:#f9f9f9;border:1px solid #e6e6e6;box-sizing:border-box;border-radius:4px;"></div>
<div class="t" style="left:403.00px;width:84px;text-align:center;top:548.43px;font-size:13.2px;line-height:16px;color:#a0a0a0;">Speichern</div>
<div class="r" style="left:497px;top:545px;width:97px;height:25px;background:#fdfdfd;border:1px solid #d0d0d0;box-sizing:border-box;border-radius:4px;"></div>
<div class="t" style="left:497.00px;width:97px;text-align:center;top:548.43px;font-size:13.2px;line-height:16px;color:#000;">Verwaltung</div>
<div class="r" style="left:605px;top:545px;width:137px;height:25px;background:#fdfdfd;border:1px solid #d0d0d0;box-sizing:border-box;border-radius:4px;"></div>
<div class="t" style="left:605.00px;width:137px;text-align:center;top:548.43px;font-size:13.2px;line-height:16px;color:#000;">Zurücksetzen</div>
<div class="r" style="left:776px;top:121px;width:1074px;height:458px;background:#ffffff;"></div>
<div class="r" style="left:978px;top:482px;width:88px;height:26px;background:#418cf0;"></div>
<div class="r" style="left:1088px;top:484px;width:88px;height:24px;background:#418cf0;"></div>
<div class="r" style="left:1197px;top:175px;width:88px;height:333px;background:#418cf0;"></div>
<div class="r" style="left:1307px;top:399px;width:88px;height:109px;background:#418cf0;"></div>
<div class="r" style="left:1417px;top:496px;width:88px;height:12px;background:#418cf0;"></div>
<div class="r" style="left:1526px;top:420px;width:88px;height:88px;background:#418cf0;"></div>
<div class="r" style="left:902px;top:147px;width:778px;height:1px;background:#000;"></div>
<div class="r" style="left:902px;top:219px;width:778px;height:1px;background:#000;"></div>
<div class="r" style="left:902px;top:291px;width:778px;height:1px;background:#000;"></div>
<div class="r" style="left:902px;top:363px;width:778px;height:1px;background:#000;"></div>
<div class="r" style="left:902px;top:436px;width:778px;height:1px;background:#000;"></div>
<div class="r" style="left:912px;top:147px;width:1px;height:361px;background:#000;"></div>
<div class="r" style="left:1022px;top:147px;width:1px;height:361px;background:#000;"></div>
<div class="r" style="left:1132px;top:147px;width:1px;height:361px;background:#000;"></div>
<div class="r" style="left:1241px;top:147px;width:1px;height:361px;background:#000;"></div>
<div class="r" style="left:1351px;top:147px;width:1px;height:361px;background:#000;"></div>
<div class="r" style="left:1461px;top:147px;width:1px;height:361px;background:#000;"></div>
<div class="r" style="left:1570px;top:147px;width:1px;height:361px;background:#000;"></div>
<div class="r" style="left:1680px;top:147px;width:1px;height:361px;background:#000;"></div>
<div class="r" style="left:912px;top:508px;width:1px;height:6px;background:#000;"></div>
<div class="r" style="left:1022px;top:508px;width:1px;height:6px;background:#000;"></div>
<div class="r" style="left:1132px;top:508px;width:1px;height:6px;background:#000;"></div>
<div class="r" style="left:1241px;top:508px;width:1px;height:6px;background:#000;"></div>
<div class="r" style="left:1351px;top:508px;width:1px;height:6px;background:#000;"></div>
<div class="r" style="left:1461px;top:508px;width:1px;height:6px;background:#000;"></div>
<div class="r" style="left:1570px;top:508px;width:1px;height:6px;background:#000;"></div>
<div class="r" style="left:1680px;top:508px;width:1px;height:6px;background:#000;"></div>
<div class="r" style="left:1680px;top:147px;width:1px;height:362px;background:#000;"></div>
<div class="r" style="left:978px;top:482px;width:88px;height:26px;background:#418cf0;"></div>
<div class="r" style="left:1088px;top:484px;width:88px;height:24px;background:#418cf0;"></div>
<div class="r" style="left:1197px;top:175px;width:88px;height:333px;background:#418cf0;"></div>
<div class="r" style="left:1307px;top:399px;width:88px;height:109px;background:#418cf0;"></div>
<div class="r" style="left:1417px;top:496px;width:88px;height:12px;background:#418cf0;"></div>
<div class="r" style="left:1526px;top:420px;width:88px;height:88px;background:#418cf0;"></div>
<div class="r" style="left:902px;top:508px;width:779px;height:1px;background:#000;"></div>
<div class="t" style="left:819px;width:80px;text-align:right;top:136.46px;font-size:16px;line-height:20px;color:#000;letter-spacing:-0.35px;">10000</div>
<div class="t" style="left:819px;width:80px;text-align:right;top:208.46px;font-size:16px;line-height:20px;color:#000;letter-spacing:-0.35px;">8000</div>
<div class="t" style="left:819px;width:80px;text-align:right;top:280.46px;font-size:16px;line-height:20px;color:#000;letter-spacing:-0.35px;">6000</div>
<div class="t" style="left:819px;width:80px;text-align:right;top:352.46px;font-size:16px;line-height:20px;color:#000;letter-spacing:-0.35px;">4000</div>
<div class="t" style="left:819px;width:80px;text-align:right;top:425.46px;font-size:16px;line-height:20px;color:#000;letter-spacing:-0.35px;">2000</div>
<div class="t" style="left:819px;width:80px;text-align:right;top:497.46px;font-size:16px;line-height:20px;color:#000;letter-spacing:-0.35px;">0</div>
<div class="t" style="left:972.50px;width:100px;text-align:center;top:517.46px;font-size:16px;line-height:20px;color:#000;">04.2016</div>
<div class="t" style="left:1082.50px;width:100px;text-align:center;top:517.46px;font-size:16px;line-height:20px;color:#000;">05.2016</div>
<div class="t" style="left:1191.50px;width:100px;text-align:center;top:517.46px;font-size:16px;line-height:20px;color:#000;">06.2016</div>
<div class="t" style="left:1301.50px;width:100px;text-align:center;top:517.46px;font-size:16px;line-height:20px;color:#000;">09.2016</div>
<div class="t" style="left:1411.50px;width:100px;text-align:center;top:517.46px;font-size:16px;line-height:20px;color:#000;">10.2016</div>
<div class="t" style="left:1520.50px;width:100px;text-align:center;top:517.46px;font-size:16px;line-height:20px;color:#000;">07.2018</div>
<div class="t" style="left:1196.00px;width:200px;text-align:center;top:546.50px;font-size:13px;line-height:16px;color:#000;">Datum: Monat.Jahr</div>
<div class="t" style="left:804px;top:318.5px;width:46px;height:16px;font-size:13.5px;line-height:16px;text-align:center;transform:rotate(-90deg);transform-origin:23px 8px;">Betrag</div>
<div class="r" style="left:1728px;top:144px;width:27px;height:12px;background:#418cf0;border:1px solid #000;box-sizing:border-box;"></div>
<div class="t" style="left:1759px;top:142.00px;font-size:13px;line-height:16px;color:#000;">Betrag</div>
<svg class="r" style="left:1858px;top:121px;" width="46" height="42" viewBox="0 0 46 42"><defs><linearGradient id="sb121" x1="0" y1="0" x2="0" y2="1"><stop offset="0" stop-color="#fbfbfb"/><stop offset="1" stop-color="#f1f1f1"/></linearGradient></defs>
<rect x="0.5" y="0.5" width="45" height="41" rx="3.5" fill="#fefefe" stroke="#cdcdcd" stroke-width="1"/>
<rect x="5.5" y="3.5" width="35" height="35" fill="url(#sb121)" stroke="#c9c9c9" stroke-width="1.2"/><circle cx="22.9" cy="20.8" r="12.3" fill="#fff" stroke="#cacaca" stroke-width="1.4"/>
<circle cx="22.9" cy="14.9" r="2" fill="#f58a1f"/>
<path d="M21 19.2 H25.1 V27.7 H21z M19.1 19.2 H25.1 V21 H19.1z M19.1 25.2 H27 V27.7 H19.1z" fill="#cbcbcb"/></svg>
<svg class="r" style="left:1858px;top:432px;" width="46" height="42" viewBox="0 0 46 42"><defs><linearGradient id="sb432" x1="0" y1="0" x2="0" y2="1"><stop offset="0" stop-color="#fbfbfb"/><stop offset="1" stop-color="#f1f1f1"/></linearGradient></defs>
<rect x="0.5" y="0.5" width="45" height="41" rx="3.5" fill="#fefefe" stroke="#cdcdcd" stroke-width="1"/>
<rect x="5.5" y="3.5" width="35" height="35" fill="url(#sb432)" stroke="#c9c9c9" stroke-width="1.2"/><path d="M12.3 31.8 L19.5 24.6" stroke="#c4c4c4" stroke-width="4.4" stroke-linecap="round"/>
<path d="M12.3 31.8 L19.5 24.6" stroke="#fafafa" stroke-width="2.2" stroke-linecap="round"/>
<circle cx="27.3" cy="17" r="8.6" fill="#fff" stroke="#c6c6c6" stroke-width="1.5"/><path d="M24 17 h6.6 M27.3 13.7 v6.6" stroke="#f58a1f" stroke-width="1.5"/></svg>
<svg class="r" style="left:1858px;top:484px;" width="46" height="42" viewBox="0 0 46 42"><defs><linearGradient id="sb484" x1="0" y1="0" x2="0" y2="1"><stop offset="0" stop-color="#fbfbfb"/><stop offset="1" stop-color="#f1f1f1"/></linearGradient></defs>
<rect x="0.5" y="0.5" width="45" height="41" rx="3.5" fill="#fefefe" stroke="#cdcdcd" stroke-width="1"/>
<rect x="5.5" y="3.5" width="35" height="35" fill="url(#sb484)" stroke="#c9c9c9" stroke-width="1.2"/><path d="M12.3 31.8 L19.5 24.6" stroke="#c4c4c4" stroke-width="4.4" stroke-linecap="round"/>
<path d="M12.3 31.8 L19.5 24.6" stroke="#fafafa" stroke-width="2.2" stroke-linecap="round"/>
<circle cx="27.3" cy="17" r="8.6" fill="#fff" stroke="#c6c6c6" stroke-width="1.5"/><path d="M23.8 17 h7" stroke="#f58a1f" stroke-width="1.5"/></svg>
<svg class="r" style="left:1858px;top:536px;" width="46" height="42" viewBox="0 0 46 42"><defs><linearGradient id="sb536" x1="0" y1="0" x2="0" y2="1"><stop offset="0" stop-color="#fbfbfb"/><stop offset="1" stop-color="#f1f1f1"/></linearGradient></defs>
<rect x="0.5" y="0.5" width="45" height="41" rx="3.5" fill="#fefefe" stroke="#cdcdcd" stroke-width="1"/>
<rect x="5.5" y="3.5" width="35" height="35" fill="url(#sb536)" stroke="#c9c9c9" stroke-width="1.2"/><path d="M12.3 31.8 L19.5 24.6" stroke="#c4c4c4" stroke-width="4.4" stroke-linecap="round"/>
<path d="M12.3 31.8 L19.5 24.6" stroke="#fafafa" stroke-width="2.2" stroke-linecap="round"/>
<circle cx="27.3" cy="17" r="8.6" fill="#fff" stroke="#c6c6c6" stroke-width="1.5"/><text x="27.3" y="20.8" font-family="Liberation Sans" font-weight="bold" font-size="10.5" fill="#f58a1f" text-anchor="middle">0</text></svg>
<div class="r" style="left:782px;top:592px;width:98px;height:26px;background:#fdfdfd;border:1px solid #d0d0d0;box-sizing:border-box;border-radius:4px;"></div>
<div class="t" style="left:782.00px;width:98px;text-align:center;top:596.50px;font-size:13px;line-height:16px;color:#000;">Speichern</div>
<div class="r" style="left:890px;top:592px;width:98px;height:26px;background:#fdfdfd;border:1px solid #d0d0d0;box-sizing:border-box;border-radius:4px;"></div>
<div class="t" style="left:902px;top:596.11px;font-size:14.1px;line-height:18px;color:#000;">Drucken</div>
<svg class="r" style="left:975px;top:601px;" width="6" height="8" viewBox="0 0 6 8"><path d="M1 0.5 L5 4 L1 7.5z" fill="#000"/></svg>
<div class="r" style="left:998px;top:592px;width:101px;height:26px;background:#fdfdfd;border:1px solid #d0d0d0;box-sizing:border-box;border-radius:4px;"></div>
<div class="t" style="left:1010px;top:596.11px;font-size:14.1px;line-height:18px;color:#000;">Legende</div>
<svg class="r" style="left:1086px;top:601px;" width="6" height="8" viewBox="0 0 6 8"><path d="M1 0.5 L5 4 L1 7.5z" fill="#000"/></svg>
<div class="r" style="left:1109px;top:592px;width:127px;height:26px;background:#fdfdfd;border:1px solid #d0d0d0;box-sizing:border-box;border-radius:4px;"></div>
<div class="t" style="left:1122px;top:596.11px;font-size:14.1px;line-height:18px;color:#000;">Datenpunkte</div>
<svg class="r" style="left:1223px;top:601px;" width="6" height="8" viewBox="0 0 6 8"><path d="M1 0.5 L5 4 L1 7.5z" fill="#000"/></svg>
<div class="r" style="left:3px;top:620px;width:754px;height:449px;background:#f9f9f9;border:1px solid #dcdcdc;box-sizing:border-box;"></div>
<div class="r" style="left:5px;top:600px;width:166px;height:21px;background:#f0f0f0;border:1px solid #dcdcdc;border-bottom:none;box-sizing:border-box;overflow:hidden;"></div>
<div class="t" style="left:11.5px;top:601.89px;font-size:13.3px;line-height:17px;color:#000;">Auswertungseinstellungen</div>
<div class="r" style="left:170px;top:598px;width:52px;height:23px;background:#f9f9f9;border:1px solid #dcdcdc;border-bottom:none;box-sizing:border-box;overflow:hidden;"></div>
<div class="t" style="left:178px;top:599.89px;font-size:13.3px;line-height:17px;color:#000;">Filter</div>
<div class="r" style="left:171px;top:620px;width:50px;height:2px;background:#f9f9f9;"></div>
<div class="r" style="left:11px;top:649px;width:738px;height:412px;background:#f9f9f9;border:1px solid #dcdcdc;box-sizing:border-box;"></div>
<div class="r" style="left:13px;top:628px;width:49px;height:22px;background:#f0f0f0;border:1px solid #dcdcdc;border-bottom:none;box-sizing:border-box;overflow:hidden;"></div>
<div class="t" style="left:19px;top:630.89px;font-size:13.3px;line-height:17px;color:#000;">Artikel</div>
<div class="r" style="left:61px;top:628px;width:55px;height:22px;background:#f0f0f0;border:1px solid #dcdcdc;border-bottom:none;box-sizing:border-box;overflow:hidden;"></div>
<div class="t" style="left:67.5px;top:630.89px;font-size:13.3px;line-height:17px;color:#000;">Auftrag</div>
<div class="r" style="left:174px;top:628px;width:94px;height:22px;background:#f0f0f0;border:1px solid #dcdcdc;border-bottom:none;box-sizing:border-box;overflow:hidden;"></div>
<div class="t" style="left:179px;top:630.89px;font-size:13.3px;line-height:17px;color:#000;">Lieferadresse</div>
<div class="r" style="left:267px;top:628px;width:129px;height:22px;background:#f0f0f0;border:1px solid #dcdcdc;border-bottom:none;box-sizing:border-box;overflow:hidden;"></div>
<div class="t" style="left:274px;top:630.89px;font-size:13.3px;line-height:17px;color:#000;">Rechnungsadresse</div>
<div class="r" style="left:115px;top:626px;width:60px;height:24px;background:#f9f9f9;border:1px solid #dcdcdc;border-bottom:none;box-sizing:border-box;overflow:hidden;"></div>
<div class="t" style="left:122.5px;top:628.89px;font-size:13.3px;line-height:17px;color:#000;">Kunden</div>
<div class="r" style="left:116px;top:649px;width:58px;height:2px;background:#f9f9f9;"></div>
<div class="r" style="left:14px;top:653px;width:731px;height:22px;background:#f0f0f0;"></div>
<div class="r" style="left:15px;top:675px;width:730px;height:382px;background:#f9f9f9;border:1px solid #dcdcdc;box-sizing:border-box;"></div>
<div class="r" style="left:17px;top:654px;width:70px;height:22px;background:#f0f0f0;border:1px solid #dcdcdc;border-bottom:none;box-sizing:border-box;overflow:hidden;"></div>
<div class="t" style="left:23px;top:655.89px;font-size:13.3px;line-height:17px;color:#000;">Kategorie</div>
<div class="r" style="left:86px;top:654px;width:50px;height:22px;background:#f0f0f0;border:1px solid #dcdcdc;border-bottom:none;box-sizing:border-box;overflow:hidden;"></div>
<div class="t" style="left:93px;top:655.89px;font-size:13.3px;line-height:17px;color:#000;">Kunde</div>
<div class="r" style="left:136px;top:652px;width:103px;height:24px;background:#f9f9f9;border:1px solid #dcdcdc;border-bottom:none;box-sizing:border-box;overflow:hidden;"></div>
<div class="t" style="left:143.5px;top:653.39px;font-size:13.3px;line-height:17px;color:#000;">Kundengruppe</div>
<div class="r" style="left:137px;top:675px;width:101px;height:2px;background:#f9f9f9;"></div>
<div class="r" style="left:19px;top:677px;width:724px;height:376px;background:#f0f0f0;"></div>
<div class="r" style="left:19px;top:684px;width:724px;height:369px;border:1px solid #dcdcdc;box-sizing:border-box;"></div>
<div class="r" style="left:25px;top:683px;width:100px;height:3px;background:#f0f0f0;"></div>
<div class="t" style="left:28px;top:676.08px;font-size:14.2px;line-height:18px;color:#000;">Kundengruppe</div>
<svg class="r" style="left:27px;top:702px;" width="16" height="16" viewBox="0 0 16 16"><circle cx="8" cy="8" r="7.4" fill="#f5f5f5" stroke="#5a5a5a" stroke-width="1.1"/></svg>
<div class="t" style="left:47px;top:702.50px;font-size:13px;line-height:16px;color:#000;">Inaktiv</div>
<svg class="r" style="left:27px;top:731px;" width="16" height="16" viewBox="0 0 16 16"><circle cx="8" cy="8" r="8" fill="#0063b1"/><circle cx="8" cy="8" r="3.6" fill="#fff"/></svg>
<div class="t" style="left:47px;top:731.50px;font-size:13px;line-height:16px;color:#000;">Nur Markierte Elemente berücksichtigen</div>
<svg class="r" style="left:27px;top:760px;" width="16" height="16" viewBox="0 0 16 16"><circle cx="8" cy="8" r="7.4" fill="#f5f5f5" stroke="#5a5a5a" stroke-width="1.1"/></svg>
<div class="t" style="left:47px;top:760.50px;font-size:13px;line-height:16px;color:#000;">Markierte Elemente ausschließen</div>
<div class="r" style="left:28px;top:788px;width:706px;height:257px;background:#ffffff;border:1px solid #828790;box-sizing:border-box;"></div>
<div class="r" style="left:30px;top:834px;width:702px;height:1px;background:#eeeeee;"></div>
<div class="r" style="left:30px;top:854px;width:702px;height:1px;background:#eeeeee;"></div>
<div class="r" style="left:30px;top:874px;width:702px;height:1px;background:#eeeeee;"></div>
<div class="r" style="left:30px;top:894px;width:702px;height:1px;background:#eeeeee;"></div>
<div class="r" style="left:30px;top:914px;width:702px;height:1px;background:#eeeeee;"></div>
<div class="r" style="left:30px;top:934px;width:702px;height:1px;background:#eeeeee;"></div>
<div class="r" style="left:30px;top:954px;width:702px;height:1px;background:#eeeeee;"></div>
<div class="r" style="left:30px;top:974px;width:702px;height:1px;background:#eeeeee;"></div>
<div class="r" style="left:30px;top:994px;width:702px;height:1px;background:#eeeeee;"></div>
<div class="r" style="left:30px;top:1014px;width:702px;height:1px;background:#eeeeee;"></div>
<div class="r" style="left:30px;top:1034px;width:702px;height:1px;background:#eeeeee;"></div>
<div class="r" style="left:633px;top:793px;width:1px;height:247px;background:#eaeaea;"></div>
<div class="r" style="left:30px;top:815px;width:603px;height:20px;background:#efefef;"></div>
<svg class="r" style="left:36px;top:792px;" width="16" height="16" viewBox="0 0 16 16"><rect x="0.55" y="0.55" width="14.9" height="14.9" rx="3" fill="#f5f5f5" stroke="#5a5a5a" stroke-width="1.1"/></svg>
<div class="t" style="left:58.5px;top:792.86px;font-size:13.4px;line-height:17px;color:#000;">Name</div>
<svg class="r" style="left:34px;top:817px;" width="16" height="16" viewBox="0 0 16 16"><rect x="0" y="0" width="16" height="16" rx="3" fill="#0063b1"/><path d="M4 8.3 l2.6 2.6 l5 -5" fill="none" stroke="#fff" stroke-width="1.2"/></svg>
<div class="t" style="left:58px;top:816.21px;font-size:14.4px;line-height:18px;color:#000;">Endkunden</div>
<svg class="r" style="left:34px;top:837px;" width="16" height="16" viewBox="0 0 16 16"><rect x="0.55" y="0.55" width="14.9" height="14.9" rx="3" fill="#f5f5f5" stroke="#5a5a5a" stroke-width="1.1"/></svg>
<div class="t" style="left:58px;top:836.21px;font-size:14.4px;line-height:18px;color:#000;">Händler</div>
<svg class="r" style="left:34px;top:857px;" width="16" height="16" viewBox="0 0 16 16"><rect x="0.55" y="0.55" width="14.9" height="14.9" rx="3" fill="#f5f5f5" stroke="#5a5a5a" stroke-width="1.1"/></svg>
<div class="t" style="left:58px;top:856.21px;font-size:14.4px;line-height:18px;color:#000;">Profisportler</div>
<div class="r" style="left:624px;top:1080px;width:135px;height:29px;background:#fdfdfd;border:1px solid #0063b1;box-sizing:border-box;border-radius:4px;"></div>
<div class="t" style="left:626.50px;width:135px;text-align:center;top:1086.50px;font-size:13px;line-height:16px;color:#000;">Auswertung starten</div>
<div class="r" style="left:773px;top:655px;width:1134px;height:410px;background:#f9f9f9;border:1px solid #dcdcdc;box-sizing:border-box;"></div>
<div class="r" style="left:775px;top:634px;width:80px;height:22px;background:#f0f0f0;border:1px solid #dcdcdc;border-bottom:none;box-sizing:border-box;overflow:hidden;"></div>
<div class="t" style="left:781.5px;top:636.89px;font-size:13.3px;line-height:17px;color:#000;">Auswertung</div>
<div class="r" style="left:1011px;top:634px;width:123px;height:22px;background:#f0f0f0;border:1px solid #dcdcdc;border-bottom:none;box-sizing:border-box;overflow:hidden;"></div>
<div class="t" style="left:1016px;top:636.89px;font-size:13.3px;line-height:17px;color:#000;">Zusammenfassung</div>
<div class="r" style="left:854px;top:632px;width:158px;height:24px;background:#f9f9f9;border:1px solid #dcdcdc;border-bottom:none;box-sizing:border-box;overflow:hidden;"></div>
<div class="t" style="left:862px;top:634.74px;font-size:13.75px;line-height:17px;color:#000;">Diagrammeinstellungen</div>
<div class="r" style="left:855px;top:655px;width:156px;height:2px;background:#f9f9f9;"></div>
<div class="r" style="left:781px;top:684px;width:1118px;height:373px;background:#f9f9f9;border:1px solid #dcdcdc;box-sizing:border-box;"></div>
<div class="r" style="left:783px;top:663px;width:119px;height:22px;background:#f0f0f0;border:1px solid #dcdcdc;border-bottom:none;box-sizing:border-box;overflow:hidden;"></div>
<div class="r" style="left:783px;top:663px;width:118px;height:22px;overflow:hidden;">
<div class="t" style="left:2.5px;top:2.89px;font-size:13.3px;line-height:17px;color:#000;">Auswertungseinstellungen</div>
</div>
<div class="r" style="left:901px;top:661px;width:124px;height:24px;background:#f9f9f9;border:1px solid #dcdcdc;border-bottom:none;box-sizing:border-box;overflow:hidden;"></div>
<div class="t" style="left:912.5px;top:663.39px;font-size:13.3px;line-height:17px;color:#000;">3D-Einstellungen</div>
<div class="r" style="left:902px;top:684px;width:122px;height:2px;background:#f9f9f9;"></div>
<svg class="r" style="left:797px;top:703px;" width="16" height="16" viewBox="0 0 16 16"><rect x="0.55" y="0.55" width="14.9" height="14.9" rx="3" fill="#f3f3f3" stroke="#5a5a5a" stroke-width="1.1"/></svg>
<div class="t" style="left:817px;top:702.83px;font-size:12.9px;line-height:16px;color:#000;letter-spacing:-0.15px;">3D anzeigen</div>
<div class="r" style="left:1789px;top:699px;width:95px;height:25px;background:#fafafa;border:1px solid #e0e0e0;box-sizing:border-box;border-radius:3px;"></div>
<div class="t" style="left:1789.00px;width:95px;text-align:center;top:704.43px;font-size:13.2px;line-height:16px;color:#444;">Zurücksetzen</div>
<div class="r" style="left:793px;top:745px;width:1096px;height:300px;background:#f9f9f9;border:1px solid #dedede;box-sizing:border-box;"></div>
<div class="t" style="left:919.00px;width:300px;text-align:center;top:763.68px;font-size:16.8px;line-height:21px;color:#404040;font-weight:700;">Rotation</div>
<div class="t" style="left:1463.00px;width:300px;text-align:center;top:763.68px;font-size:16.8px;line-height:21px;color:#404040;font-weight:700;">Horizontale Drehung</div>
<div class="r" style="left:806px;top:790px;width:526px;height:35px;background:#f0f0f0;"></div>
<div class="r" style="left:813px;top:796px;width:494px;height:23px;background:#f0f0f0;border:1px solid #a3a6ad;box-sizing:border-box;"></div>
<div class="t" style="left:816px;top:799.00px;font-size:13px;line-height:16px;color:#6d6d6d;">30</div>
<svg class="r" style="left:1292px;top:798px;" width="13" height="18" viewBox="0 0 13 18"><rect x="0.5" y="0.5" width="12" height="8" fill="#f2f2f2" stroke="#e6e6e6"/><rect x="0.5" y="9.5" width="12" height="8" fill="#f2f2f2" stroke="#e6e6e6"/><path d="M3.3 6.3 L6.5 2.5 L9.7 6.3z" fill="#8a8a8a"/><path d="M3.3 11.7 L6.5 15.5 L9.7 11.7z" fill="#8a8a8a"/></svg>
<svg class="r" style="left:1319.7px;top:800px;" width="6" height="6" viewBox="0 0 6 6"><circle cx="3" cy="3" r="1.7" fill="none" stroke="#333" stroke-width="1"/></svg>
<div class="r" style="left:1350px;top:790px;width:526px;height:35px;background:#f0f0f0;"></div>
<div class="r" style="left:1357px;top:796px;width:494px;height:23px;background:#f0f0f0;border:1px solid #a3a6ad;box-sizing:border-box;"></div>
<div class="t" style="left:1360px;top:799.00px;font-size:13px;line-height:16px;color:#6d6d6d;">30</div>
<svg class="r" style="left:1836px;top:798px;" width="13" height="18" viewBox="0 0 13 18"><rect x="0.5" y="0.5" width="12" height="8" fill="#f2f2f2" stroke="#e6e6e6"/><rect x="0.5" y="9.5" width="12" height="8" fill="#f2f2f2" stroke="#e6e6e6"/><path d="M3.3 6.3 L6.5 2.5 L9.7 6.3z" fill="#8a8a8a"/><path d="M3.3 11.7 L6.5 15.5 L9.7 11.7z" fill="#8a8a8a"/></svg>
<svg class="r" style="left:1863px;top:800px;" width="6" height="6" viewBox="0 0 6 6"><circle cx="3" cy="3" r="1.7" fill="none" stroke="#333" stroke-width="1"/></svg>
<div class="t" style="left:919.00px;width:300px;text-align:center;top:867.68px;font-size:16.8px;line-height:21px;color:#404040;font-weight:700;">Punkttiefe</div>
<div class="t" style="left:1463.00px;width:300px;text-align:center;top:867.68px;font-size:16.8px;line-height:21px;color:#404040;font-weight:700;">Datenreihenabstand</div>
<div class="r" style="left:806px;top:894px;width:526px;height:35px;background:#f0f0f0;"></div>
<div class="r" style="left:813px;top:900px;width:487px;height:23px;background:#f0f0f0;border:1px solid #a3a6ad;box-sizing:border-box;"></div>
<div class="t" style="left:816px;top:903.00px;font-size:13px;line-height:16px;color:#6d6d6d;">100</div>
<svg class="r" style="left:1285px;top:902px;" width="13" height="18" viewBox="0 0 13 18"><rect x="0.5" y="0.5" width="12" height="8" fill="#f2f2f2" stroke="#e6e6e6"/><rect x="0.5" y="9.5" width="12" height="8" fill="#f2f2f2" stroke="#e6e6e6"/><path d="M3.3 6.3 L6.5 2.5 L9.7 6.3z" fill="#8a8a8a"/><path d="M3.3 11.7 L6.5 15.5 L9.7 11.7z" fill="#8a8a8a"/></svg>
<div class="t" style="left:1309.00px;width:20px;text-align:center;top:904.00px;font-size:13px;line-height:16px;color:#333;">%</div>
<div class="r" style="left:1350px;top:894px;width:526px;height:35px;background:#f0f0f0;"></div>
<div class="r" style="left:1357px;top:900px;width:487px;height:23px;background:#f0f0f0;border:1px solid #a3a6ad;box-sizing:border-box;"></div>
<div class="t" style="left:1360px;top:903.00px;font-size:13px;line-height:16px;color:#6d6d6d;">100</div>
<svg class="r" style="left:1829px;top:902px;" width="13" height="18" viewBox="0 0 13 18"><rect x="0.5" y="0.5" width="12" height="8" fill="#f2f2f2" stroke="#e6e6e6"/><rect x="0.5" y="9.5" width="12" height="8" fill="#f2f2f2" stroke="#e6e6e6"/><path d="M3.3 6.3 L6.5 2.5 L9.7 6.3z" fill="#8a8a8a"/><path d="M3.3 11.7 L6.5 15.5 L9.7 11.7z" fill="#8a8a8a"/></svg>
<div class="t" style="left:1852.00px;width:20px;text-align:center;top:904.00px;font-size:13px;line-height:16px;color:#333;">%</div>
<div class="t" style="left:919.00px;width:300px;text-align:center;top:971.68px;font-size:16.8px;line-height:21px;color:#404040;font-weight:700;">Perspektive</div>
<div class="r" style="left:806px;top:998px;width:526px;height:35px;background:#f0f0f0;"></div>
<div class="r" style="left:813px;top:1004px;width:487px;height:23px;background:#f0f0f0;border:1px solid #a3a6ad;box-sizing:border-box;"></div>
<div class="t" style="left:816px;top:1007.00px;font-size:13px;line-height:16px;color:#6d6d6d;">0</div>
<svg class="r" style="left:1285px;top:1006px;" width="13" height="18" viewBox="0 0 13 18"><rect x="0.5" y="0.5" width="12" height="8" fill="#f2f2f2" stroke="#e6e6e6"/><rect x="0.5" y="9.5" width="12" height="8" fill="#f2f2f2" stroke="#e6e6e6"/><path d="M3.3 6.3 L6.5 2.5 L9.7 6.3z" fill="#8a8a8a"/><path d="M3.3 11.7 L6.5 15.5 L9.7 11.7z" fill="#8a8a8a"/></svg>
<div class="t" style="left:1309.00px;width:20px;text-align:center;top:1008.00px;font-size:13px;line-height:16px;color:#333;">%</div>
</body></html>
